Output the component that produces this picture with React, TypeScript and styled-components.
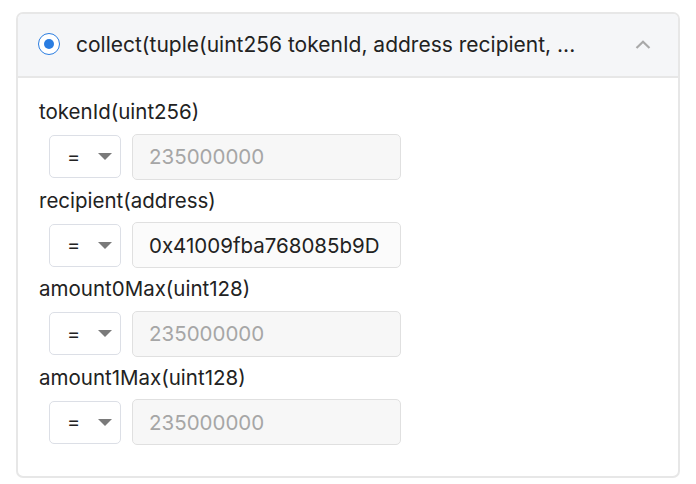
import React from "react";
import styled, { createGlobalStyle } from "styled-components";

const Global = createGlobalStyle`
  html, body { margin: 0; padding: 0; background: #ffffff; }
  body { font-family: Inter, "Liberation Sans", Arial, sans-serif; color: #222; }
  * { box-sizing: border-box; }
`;

const Page = styled.div`
  padding: 12px 16px 8px 16px;
  width: 696px;
`;

const Card = styled.div`
  border: 2px solid #e7e7e7;
  border-radius: 7px;
  overflow: hidden;
  background: #fff;
`;

const Header = styled.div`
  display: flex;
  align-items: center;
  height: 64px;
  padding: 0 27px 2px 20px;
  background: #f5f6f8;
  border-bottom: 2px solid #e7e7e7;
`;

const Radio = styled.span`
  width: 22px;
  height: 22px;
  border-radius: 50%;
  border: 1.5px solid #2a7de1;
  display: flex;
  align-items: center;
  justify-content: center;
  flex: none;
  background: #fff;
  &::after {
    content: "";
    width: 10px;
    height: 10px;
    border-radius: 50%;
    background: #2a7de1;
  }
`;

const Title = styled.span`
  flex: 1;
  margin-left: 16px;
  font-size: 21px;
  color: #222;
  white-space: nowrap;
`;

const Body = styled.div`
  display: flex;
  flex-direction: column;
  gap: 8px;
  padding: 21px 21px 31px 21px;
`;

const Label = styled.div`
  font-size: 20.5px;
  line-height: 26.5px;
  color: #222;
`;

const Row = styled.div`
  display: flex;
  align-items: center;
  gap: 11px;
  margin-left: 10px;
`;

const Select = styled.div`
  width: 72px;
  height: 43px;
  border: 1px solid #dcdfe6;
  border-radius: 5px;
  background: #fff;
  display: flex;
  align-items: center;
  padding-left: 17px;
  gap: 18px;
  font-size: 20px;
  color: #222;
`;

const Caret = styled.span`
  width: 0;
  height: 0;
  border-left: 7px solid transparent;
  border-right: 7px solid transparent;
  border-top: 7px solid #7a7a7a;
`;

const Input = styled.input<{ $filled?: boolean }>`
  width: 269px;
  height: 46px;
  border: 1px solid #e0e0e0;
  border-radius: 5px;
  background: ${(p) => (p.$filled ? "#fbfbfb" : "#f7f7f7")};
  padding: 0 16px;
  font-family: inherit;
  font-size: 20.5px;
  color: #222;
  outline: none;
  &::placeholder { color: #a6a6a6; }
`;

const fields = [
  { label: "tokenId(uint256)", value: "" },
  { label: "recipient(address)", value: "0x41009fba768085b9D" },
  { label: "amount0Max(uint128)", value: "" },
  { label: "amount1Max(uint128)", value: "" },
];

export default function App() {
  return (
    <Page>
      <Global />
      <Card>
        <Header>
          <Radio />
          <Title>collect(tuple(uint256 tokenId, address recipient, ...</Title>
          <svg width="16" height="9" viewBox="0 0 16 9" fill="none">
            <path d="M1.5 8 L8 1.8 L14.5 8" stroke="#a9a9a9" strokeWidth="2.2" />
          </svg>
        </Header>
        <Body>
          {fields.map((f) => (
            <React.Fragment key={f.label}>
              <Label>{f.label}</Label>
              <Row>
                <Select>
                  <span>=</span>
                  <Caret />
                </Select>
                <Input readOnly placeholder="235000000" value={f.value} $filled={!!f.value} />
              </Row>
            </React.Fragment>
          ))}
        </Body>
      </Card>
    </Page>
  );
}
